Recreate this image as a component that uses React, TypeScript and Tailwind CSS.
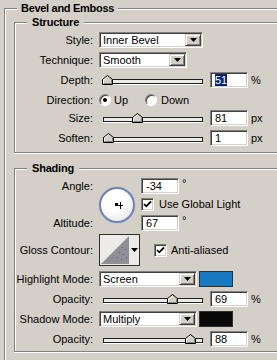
import React from "react";

const sunken =
  "bg-white border border-t-[#808080] border-l-[#808080] border-b-white border-r-white shadow-[inset_1px_1px_0_#404040,inset_-1px_-1px_0_#d4d0c8]";
const raised =
  "bg-[#d4d0c8] border border-t-[#d4d0c8] border-l-[#d4d0c8] border-b-[#404040] border-r-[#404040] shadow-[inset_1px_1px_0_#fff,inset_-1px_-1px_0_#808080]";

function Arrow() {
  return (
    <svg width="7" height="4" viewBox="0 0 7 4">
      <path d="M0 0 H7 L3.5 4 Z" fill="#000" />
    </svg>
  );
}

function Select({ className, text }: { className: string; text: string }) {
  return (
    <div className={`${className} h-[16px] flex p-[1px] ${sunken}`}>
      <div className="flex-1 pl-[2px] leading-[13px] overflow-hidden whitespace-nowrap">{text}</div>
      <div className={`w-[16px] flex items-center justify-center ${raised}`}>
        <Arrow />
      </div>
    </div>
  );
}

function Field({ children }: { children: React.ReactNode }) {
  return (
    <div className={`w-[38px] h-[16px] pl-[4px] leading-[14px] whitespace-nowrap ${sunken}`}>{children}</div>
  );
}

function Slider({ thumb }: { thumb: number }) {
  return (
    <div className="relative w-[104px] h-[16px] shrink-0">
      <div className="absolute left-[4px] top-[7px] w-[100px] h-[5px] border border-[#202020] bg-[#ecebe8] shadow-[0_1px_0_#fff]" />
      <svg className="absolute top-[3px]" style={{ left: thumb }} width="11" height="10" viewBox="0 0 11 10">
        <path d="M0.5 9.5 V4.5 L5.5 0.5 L10.5 4.5 V9.5 Z" fill="#d4d0c8" stroke="#000" />
        <path d="M1.5 8.5 V5 L5.5 1.8" fill="none" stroke="#fff" />
        <path d="M1.5 8.5 H9.5 V5" fill="none" stroke="#808080" />
      </svg>
    </div>
  );
}

function Check() {
  return (
    <div className={`w-[13px] h-[13px] shrink-0 flex items-center justify-center ${sunken}`}>
      <svg width="9" height="9" viewBox="0 0 9 9">
        <path d="M1 4 L3.2 6.3 L8 1.5" fill="none" stroke="#000" strokeWidth="1.8" />
      </svg>
    </div>
  );
}

function Radio({ on }: { on: boolean }) {
  return (
    <div className="w-[12px] h-[12px] rounded-full bg-white border border-t-[#808080] border-l-[#808080] border-b-white border-r-white shadow-[inset_1px_1px_0_#404040] flex items-center justify-center shrink-0">
      {on && <div className="w-[4px] h-[4px] rounded-full bg-black" />}
    </div>
  );
}

function Row({
  label,
  className,
  children,
}: {
  label: string;
  className?: string;
  children: React.ReactNode;
}) {
  return (
    <div className={`flex items-center h-[16px] ${className ?? ""}`}>
      <div className="w-[78px] shrink-0 text-right whitespace-nowrap">{label}</div>
      <div className="ml-[6px] flex items-center">{children}</div>
    </div>
  );
}

function SliderRow({
  label,
  thumb,
  value,
  unit,
  selected,
  className,
}: {
  label: string;
  thumb: number;
  value: string;
  unit: string;
  selected?: boolean;
  className?: string;
}) {
  return (
    <Row label={label} className={className}>
      <Slider thumb={thumb} />
      <div className="ml-[7px]">
        <Field>
          {selected ? <span className="bg-[#0a246a] text-white">{value}</span> : value}
        </Field>
      </div>
      <span className="ml-[3px]">{unit}</span>
    </Row>
  );
}

const groupBox =
  "relative border-t border-l border-b border-[#808080] shadow-[inset_1px_1px_0_#fff,0_1px_0_#fff]";

export default function App() {
  return (
    <div
      className="w-[277px] h-[360px] overflow-hidden bg-[#d4d0c8] pt-[8px] pl-[4px] text-[11px] text-black"
      style={{ fontFamily: '"Liberation Sans", Arial, sans-serif' }}
    >
      <div className="relative w-[300px] h-[400px] border-t border-l border-[#808080] shadow-[inset_1px_1px_0_#fff]">
        <div className="absolute -top-[7px] left-[12px] px-[4px] bg-[#d4d0c8] font-bold leading-[13px] tracking-[-0.3px]">
          Bevel and Emboss
        </div>

        {/* Structure */}
        <div className={`${groupBox} ml-[9px] mt-[13px] w-[290px] pt-[9px] pb-[6px]`}>
          <div className="absolute -top-[7px] left-[12px] px-[5px] bg-[#d4d0c8] font-bold leading-[13px] tracking-[-0.2px]">
            Structure
          </div>
          <Row label="Style:">
            <Select className="w-[104px]" text="Inner Bevel" />
          </Row>
          <Row label="Technique:" className="mt-[4px]">
            <Select className="w-[88px]" text="Smooth" />
          </Row>
          <SliderRow label="Depth:" thumb={3} value="51" unit="%" selected className="mt-[4px]" />
          <Row label="Direction:" className="mt-[4px]">
            <Radio on />
            <span className="ml-[3px]">Up</span>
            <div className="ml-[17px]">
              <Radio on={false} />
            </div>
            <span className="ml-[4px]">Down</span>
          </Row>
          <SliderRow label="Size:" thumb={33} value="81" unit="px" className="mt-[2px]" />
          <SliderRow label="Soften:" thumb={4} value="1" unit="px" className="mt-[4px]" />
        </div>

        {/* Shading */}
        <div className={`${groupBox} ml-[9px] mt-[15px] w-[290px] pt-[9px] pb-[4px]`}>
          <div className="absolute -top-[7px] left-[12px] px-[5px] bg-[#d4d0c8] font-bold leading-[13px] tracking-[-0.2px]">
            Shading
          </div>
          <div className="flex">
            <div className="w-[78px] shrink-0 flex flex-col justify-between text-right">
              <div className="h-[16px] leading-[16px]">Angle:</div>
              <div className="h-[16px] leading-[16px]">Altitude:</div>
            </div>
            <div className="ml-[6px] mt-[9px] relative w-[36px] h-[36px] rounded-full border-2 border-[#7083ad] bg-[radial-gradient(circle_at_40%_35%,#ffffff_40%,#dcdce4)] shadow-[0_0_0_1px_#c8cad6]">
              <svg className="absolute left-[14px] top-[13px]" width="8" height="7" viewBox="0 0 8 7">
                <rect x="0" y="1" width="3" height="3" fill="#000" />
                <path d="M5.5 0 V7 M3 3.5 H8" stroke="#000" strokeWidth="1" />
              </svg>
            </div>
            <div className="ml-[6px] flex flex-col">
              <div className="flex items-start">
                <Field>-34</Field>
                <span className="ml-[3px] leading-[10px]">°</span>
              </div>
              <div className="mt-[4px] flex items-center h-[13px]">
                <Check />
                <span className="ml-[5px] whitespace-nowrap">Use Global Light</span>
              </div>
              <div className="mt-[4px] flex items-start">
                <Field>67</Field>
                <span className="ml-[3px] leading-[10px]">°</span>
              </div>
            </div>
          </div>

          <div className="flex items-center h-[32px] mt-[3px]">
            <div className="w-[78px] shrink-0 text-right whitespace-nowrap">Gloss Contour:</div>
            <div className="ml-[6px] w-[41px] h-[32px] border border-[#303030] bg-[#ecebe8] flex">
              <svg width="30" height="30" viewBox="0 0 30 30">
                <path d="M1 29 L29 1 V29 Z" fill="#8e8e94" />
                <g fill="#5060b0">
                  <rect x="22" y="12" width="1" height="1" />
                  <rect x="25" y="14" width="1" height="1" />
                  <rect x="19" y="17" width="1" height="1" />
                  <rect x="23" y="19" width="1" height="1" />
                  <rect x="26" y="22" width="1" height="1" />
                  <rect x="21" y="24" width="1" height="1" />
                  <rect x="16" y="22" width="1" height="1" />
                </g>
              </svg>
              <div className="flex-1 flex items-center justify-center">
                <Arrow />
              </div>
            </div>
            <div className="ml-[14px]">
              <Check />
            </div>
            <span className="ml-[4px] whitespace-nowrap">Anti-aliased</span>
          </div>

          <Row label="Highlight Mode:" className="mt-[5px]">
            <Select className="w-[98px]" text="Screen" />
            <div className="ml-[2px] w-[34px] h-[16px] bg-[#1679c1] border border-[#303030]" />
          </Row>
          <SliderRow label="Opacity:" thumb={68} value="69" unit="%" className="mt-[4px]" />
          <Row label="Shadow Mode:" className="mt-[4px]">
            <Select className="w-[98px]" text="Multiply" />
            <div className="ml-[2px] w-[34px] h-[16px] bg-[#080808] border border-[#303030]" />
          </Row>
          <SliderRow label="Opacity:" thumb={86} value="88" unit="%" className="mt-[4px]" />
        </div>
      </div>
    </div>
  );
}
